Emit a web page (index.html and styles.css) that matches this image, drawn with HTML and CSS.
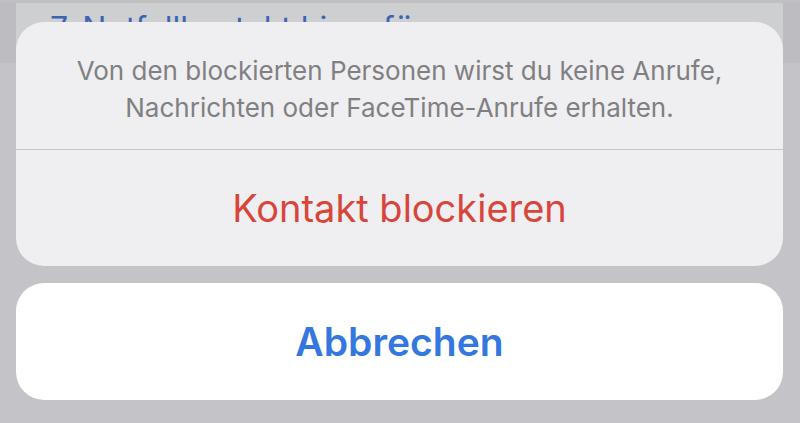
FILE: index.html
```html
<!DOCTYPE html>
<html lang="de">
<head>
<meta charset="utf-8">
<link rel="stylesheet" href="styles.css">
</head>
<body>
<div class="page">
  <div class="list">
    <div class="row">7. Notfallkontakt hinzufügen</div>
  </div>
</div>
<div class="sheet">
  <div class="group">
    <div class="message">Von den blockierten Personen wirst du keine Anrufe,<br>Nachrichten oder FaceTime-Anrufe erhalten.</div>
    <div class="action destructive">Kontakt blockieren</div>
  </div>
  <div class="group cancel">
    <div class="action cancel-label">Abbrechen</div>
  </div>
</div>
</body>
</html>
```

FILE: styles.css
```css
html, body {
  margin: 0;
  padding: 0;
  width: 800px;
  height: 423px;
  overflow: hidden;
}
body {
  background: #c4c4c8;
  font-family: Inter, "Noto Sans", "Liberation Sans", sans-serif;
  position: relative;
}
.page {
  padding: 3px 0 0 0;
  background: linear-gradient(#c0c0c3, #c0c0c3) top/100% 3px no-repeat, #bdbdc1;
  height: 60px;
  display: flex;
}
.list {
  margin-left: 16px;
  width: 767px;
  background: #cecfd1;
}
.row {
  padding: 8px 0 0 34px;
  font-size: 32px;
  line-height: 36px;
  color: #3c64b4;
  white-space: nowrap;
}
.sheet {
  position: absolute;
  left: 16px;
  top: 22px;
  width: 767px;
  display: flex;
  flex-direction: column;
  gap: 17px;
}
.group {
  background: #efeff1;
  border-radius: 28px;
  overflow: hidden;
}
.message {
  height: 128px;
  box-sizing: border-box;
  padding: 30px 20px 0;
  border-bottom: 1px solid #c6c6c8;
  text-align: center;
  font-size: 26px;
  line-height: 37px;
  color: #808083;
}
.action {
  height: 116px;
  display: flex;
  align-items: center;
  justify-content: center;
  font-size: 38px;
}
.destructive {
  color: #d8463b;
}
.cancel {
  background: #ffffff;
}
.cancel-label {
  height: 117px;
  font-size: 39px;
  color: #3477df;
  font-weight: 600;
}
```
